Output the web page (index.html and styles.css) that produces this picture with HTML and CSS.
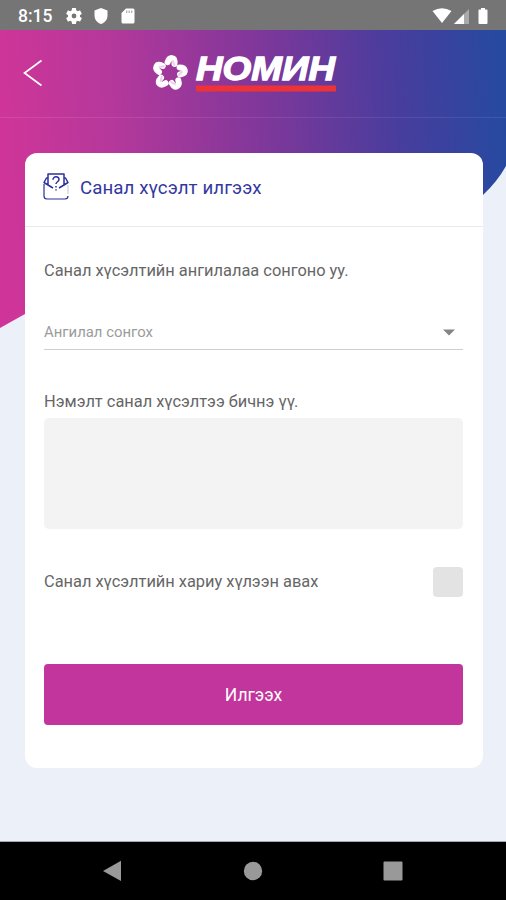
FILE: index.html
```html
<!DOCTYPE html>
<html lang="mn">
<head>
<meta charset="utf-8">
<meta name="viewport" content="width=device-width, initial-scale=1">
<title>Санал хүсэлт илгээх</title>
<link rel="stylesheet" href="styles.css">
</head>
<body>
<div class="screen">
  <div class="statusbar">
    <span class="clock">8:15</span>
    <svg class="st-gear" width="16" height="16" viewBox="2 2 20 20"><path fill="#fff" d="M19.43 12.98c.04-.32.07-.64.07-.98s-.03-.66-.07-.98l2.11-1.65c.19-.15.24-.42.12-.64l-2-3.46c-.12-.22-.39-.3-.61-.22l-2.49 1c-.52-.4-1.08-.73-1.69-.98l-.38-2.65A.49.49 0 0 0 14 2h-4c-.25 0-.46.18-.49.42l-.38 2.65c-.61.25-1.17.59-1.69.98l-2.49-1c-.23-.09-.49 0-.61.22l-2 3.46c-.13.22-.07.49.12.64l2.11 1.65c-.04.32-.07.65-.07.98s.03.66.07.98l-2.11 1.65c-.19.15-.24.42-.12.64l2 3.46c.12.22.39.3.61.22l2.49-1c.52.4 1.08.73 1.69.98l.38 2.65c.03.24.24.42.49.42h4c.25 0 .46-.18.49-.42l.38-2.65c.61-.25 1.17-.59 1.69-.98l2.49 1c.23.09.49 0 .61-.22l2-3.46c.12-.22.07-.49-.12-.64l-2.11-1.65zM12 15a3 3 0 1 1 0-6 3 3 0 0 1 0 6z"/></svg>
    <svg class="st-shield" width="14" height="16" viewBox="0 0 14 16"><path fill="#fff" d="M7 0 13.500 2.600V7.500C13.500 11.500 11 14.800 7 16 3 14.800.5 11.500.5 7.500V2.600z"/></svg>
    <svg class="st-card" width="14" height="16" viewBox="0 0 14 16"><path fill="#fff" d="M5 .5h7a1.500 1.500 0 0 1 1.500 1.500v12a1.500 1.500 0 0 1-1.500 1.500H2A1.500 1.500 0 0 1 .5 14V5z"/><path stroke="#aaa" stroke-width="1.200" d="M5.700 2.500v2.500M8.200 2.500v2.500M10.700 2.500v2.500"/></svg>
    <svg class="st-right" width="58" height="18" viewBox="0 0 58 18"><path fill="#fff" d="M.5 4Q10 -1.500 19.500 4L10 16z"/><path fill="#aaa" d="M37 2v15H22z"/><path fill="#fff" d="M32 7v10H22z"/><path fill="#fff" d="M49 1h4v1.500h1.500a1 1 0 0 1 1 1V16a1 1 0 0 1-1 1h-7a1 1 0 0 1-1-1V3.500a1 1 0 0 1 1-1H49z"/></svg>
  </div>
  <div class="content">
    <svg class="backdrop" width="506" height="300" viewBox="0 0 506 300">
      <defs><linearGradient id="brand" gradientUnits="userSpaceOnUse" x1="0" y1="60" x2="506" y2="30"><stop offset="0" stop-color="#cf3598"/><stop offset=".22" stop-color="#b5389b"/><stop offset=".5" stop-color="#82379a"/><stop offset=".78" stop-color="#483d9d"/><stop offset="1" stop-color="#254aa0"/></linearGradient></defs>
      <path fill="url(#brand)" d="M0 0H506V136Q497 152 483 165Q430 214 300 214Q120 220 25 284L0 298z"/>
    </svg>
    <div class="header">
      <svg class="back" width="20" height="28" viewBox="0 0 20 28"><path fill="none" stroke="#fff" stroke-width="1.700" d="M18.500 1.500 1.500 14 18.500 26.500"/></svg>
      <svg class="logo" width="190" height="60" viewBox="150 42 190 60">
        <defs><g id="petal"><path fill="none" stroke="#fff" stroke-width="6" stroke-linecap="round" stroke-linejoin="round" d="M-3.500-10.500Q-2.500-15 .5-15T3.500-9.500"/><path fill="none" stroke="#dfb4dc" stroke-width="2.200" stroke-linecap="round" d="M1.500-12 3.500-8.500" opacity=".6"/></g></defs>
        <g transform="translate(170 73)">
          <use href="#petal" transform="rotate(6)"/><use href="#petal" transform="rotate(78)"/><use href="#petal" transform="rotate(150)"/><use href="#petal" transform="rotate(222)"/><use href="#petal" transform="rotate(294)"/>
        </g>
        <text class="wordmark" x="196" y="80" textLength="139" lengthAdjust="spacingAndGlyphs">НОМИН</text>
        <path fill="#ee3338" d="M196 85.500H336V91.500H196z"/>
      </svg>
    </div>
    <main class="card">
      <div class="card-head">
        <svg class="mail" width="26" height="27" viewBox="0 0 26 27"><g fill="none" stroke="#2b319c" stroke-width="1.500" stroke-linejoin="round"><path d="M1 11v12a3 3 0 0 0 3 3h18a3 3 0 0 0 3-3" stroke-width="1.200"/><path d="M5 12V1h16v11M5 5H3.500L1 9.500 5 12 10 15M16 15l5-3 4-2.500L22.500 5H21"/><path d="M10 6.700c0-4 6-3.500 6-.2 0 2.300-3 2.200-3 4.500M13 13v1.600M13 16.300v1.200"/></g><path d="M25 12v9" fill="none" stroke="#c4c5df"/></svg>
        <h1>Санал хүсэлт илгээх</h1>
      </div>
      <div class="card-body">
        <p class="label l1">Санал хүсэлтийн ангилалаа сонгоно уу.</p>
        <div class="select"><span>Ангилал сонгох</span><svg width="12" height="7" viewBox="0 0 12 7"><path fill="#858585" d="M0 .5h12L6 6.500z"/></svg></div>
        <p class="label l2">Нэмэлт санал хүсэлтээ бичнэ үү.</p>
        <div class="textarea"></div>
        <div class="check-row"><p class="label l3">Санал хүсэлтийн хариу хүлээн авах</p><span class="checkbox"></span></div>
        <div class="submit"><span>Илгээх</span></div>
      </div>
    </main>
  </div>
  <div class="navbar">
    <svg width="20" height="22" viewBox="0 0 20 22"><path fill="#999" d="M0 11 18 .8V21z"/></svg>
    <svg width="20" height="20" viewBox="0 0 20 20"><circle cx="10" cy="10" r="9.200" fill="#999"/></svg>
    <svg width="20" height="20" viewBox="0 0 20 20"><rect x=".5" y=".5" width="19" height="19" rx="1" fill="#999"/></svg>
  </div>
</div>
</body>
</html>
```
FILE: styles.css
```css
* { box-sizing: border-box; }
body, h1, p { margin: 0; font-weight: 400; }
body { font-family: Roboto, "Liberation Sans", sans-serif; }
svg { display: block; flex: none; }
.screen { width: 506px; height: 900px; display: flex; flex-direction: column; overflow: hidden; background: #ecf1f9; }
.statusbar { height: 30px; background: #757575; display: flex; align-items: center; padding: 1px 16px 0 18px; flex: none; }
.clock { color: #fff; font-size: 17.500px; font-weight: 500; width: 48px; line-height: 28px; padding-top: 1px; }
.st-shield { margin-left: 12px; }
.st-card { margin-left: 13px; }
.st-right { margin-left: auto; }
.content { position: relative; height: 812px; flex: none; border-bottom: 1px solid #a5a8ad; }
.backdrop { position: absolute; left: 0; top: 0; }
.header { position: relative; height: 88px; display: flex; align-items: flex-start; border-bottom: 1px solid rgba(255,255,255,.09); padding-left: 23px; }
.back { margin-top: 29px; }
.logo { margin: 12px 0 0 107px; overflow: visible; }
.wordmark { font: italic 700 34px "Liberation Sans", Arial, sans-serif; fill: #fff; stroke: #fff; stroke-width: 1.300px; }
.card { position: relative; width: 458px; height: 615px; margin: 35px 0 0 25px; background: #fff; border-radius: 12px; }
.card-head { height: 74px; display: flex; padding: 20px 18px 0; border-bottom: 1px solid #e6ebee; }
h1 { font-size: 18.700px; color: #3338a0; line-height: 30px; margin-left: 11px; white-space: nowrap; letter-spacing: .08px; }
.card-body { padding: 34px 20px 0 19px; }
.label { font-size: 16.400px; line-height: 20px; color: #666; white-space: nowrap; }
.select { height: 32px; margin-top: 37px; display: flex; justify-content: space-between; align-items: flex-start; border-bottom: 1px solid #cfcfcf; padding-right: 8px; padding-top: 3px; }
.select span { font-size: 14.900px; line-height: 22px; color: #9c9c9c; white-space: nowrap; }
.select svg { margin-top: 8px; }
.select + .label { margin-top: 42px; }
.textarea { height: 111px; margin-top: 6px; border-radius: 5px; background: #f3f3f3; }
.check-row { margin-top: 37px; height: 31px; display: flex; align-items: center; justify-content: space-between; }
.checkbox { width: 30px; height: 30px; border-radius: 4px; background: #e3e3e3; }
.submit { height: 61px; margin-top: 67px; border-radius: 4px; background: #c2359c; color: #fff; font-size: 17.500px; display: flex; align-items: center; justify-content: center; }
.navbar { flex: 1; background: #000; display: flex; align-items: center; justify-content: space-between; padding: 0 103px; }
```
